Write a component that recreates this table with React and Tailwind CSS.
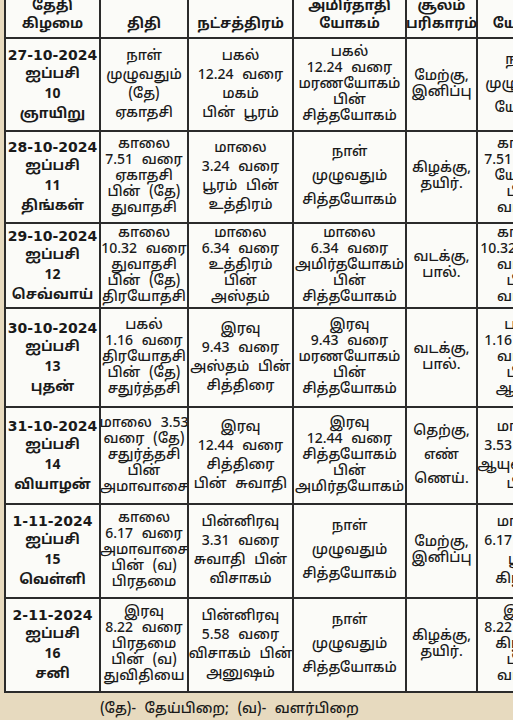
import React from "react";

const head = [
  ["தேதி", "கிழமை"],
  ["திதி"],
  ["நட்சத்திரம்"],
  ["அமிர்தாதி", "யோகம்"],
  ["சூலம்", "பரிகாரம்"],
  ["யோகம்"],
];

const rows = [
  {
    h: "h-[91px]",
    date: ["27-10-2024", "ஐப்பசி", "10", "ஞாயிறு"],
    cells: [
      ["நாள்", "முழுவதும்", "(தே)", "ஏகாதசி"],
      ["பகல்", "12.24 வரை", "மகம்", "பின் பூரம்"],
      ["பகல்", "12.24 வரை", "மரணயோகம்", "பின்", "சித்தயோகம்"],
      ["மேற்கு,", "இனிப்பு"],
      ["நாள்", "முழுவதும்", "யோகம்"],
    ],
  },
  {
    h: "h-[90px]",
    date: ["28-10-2024", "ஐப்பசி", "11", "திங்கள்"],
    cells: [
      ["காலை", "7.51 வரை", "ஏகாதசி", "பின் (தே)", "துவாதசி"],
      ["மாலை", "3.24 வரை", "பூரம் பின்", "உத்திரம்"],
      ["நாள்", "முழுவதும்", "சித்தயோகம்"],
      ["கிழக்கு,", "தயிர்."],
      ["காலை", "7.51 வரை", "யோகம்", "பின்", "வடக்கு"],
    ],
  },
  {
    h: "h-[83px]",
    date: ["29-10-2024", "ஐப்பசி", "12", "செவ்வாய்"],
    cells: [
      ["காலை", "10.32 வரை", "துவாதசி", "பின் (தே)", "திரயோதசி"],
      ["மாலை", "6.34 வரை", "உத்திரம்", "பின்", "அஸ்தம்"],
      ["மாலை", "6.34 வரை", "அமிர்தயோகம்", "பின்", "சித்தயோகம்"],
      ["வடக்கு,", "பால்."],
      ["காலை", "10.32 வரை", "வடக்கு", "பின்", "வடக்கு"],
    ],
  },
  {
    h: "h-[97px]",
    date: ["30-10-2024", "ஐப்பசி", "13", "புதன்"],
    cells: [
      ["பகல்", "1.16 வரை", "திரயோதசி", "பின் (தே)", "சதுர்த்தசி"],
      ["இரவு", "9.43 வரை", "அஸ்தம் பின்", "சித்திரை"],
      ["இரவு", "9.43 வரை", "மரணயோகம்", "பின்", "சித்தயோகம்"],
      ["வடக்கு,", "பால்."],
      ["பகல்", "1.16 வரை", "வடக்கு", "பின்", "ஆக்கம்"],
    ],
  },
  {
    h: "h-[95px]",
    date: ["31-10-2024", "ஐப்பசி", "14", "வியாழன்"],
    cells: [
      ["மாலை 3.53", "வரை (தே)", "சதுர்த்தசி", "பின்", "அமாவாசை"],
      ["இரவு", "12.44 வரை", "சித்திரை", "பின் சுவாதி"],
      ["இரவு", "12.44 வரை", "சித்தயோகம்", "பின்", "அமிர்தயோகம்"],
      ["தெற்கு,", "எண்", "ணெய்."],
      ["மாலை", "3.53 வரை", "ஆயுஷ்மான்", "பின்"],
    ],
  },
  {
    h: "h-[92px]",
    date: ["1-11-2024", "ஐப்பசி", "15", "வெள்ளி"],
    cells: [
      ["காலை", "6.17 வரை", "அமாவாசை", "பின் (வ)", "பிரதமை"],
      ["பின்னிரவு", "3.31 வரை", "சுவாதி பின்", "விசாகம்"],
      ["நாள்", "முழுவதும்", "சித்தயோகம்"],
      ["மேற்கு,", "இனிப்பு"],
      ["மாலை", "6.17 வரை", "பூமி", "கிழக்கு"],
    ],
  },
  {
    h: "h-[92px]",
    date: ["2-11-2024", "ஐப்பசி", "16", "சனி"],
    cells: [
      ["இரவு", "8.22 வரை", "பிரதமை", "பின் (வ)", "துவிதியை"],
      ["பின்னிரவு", "5.58 வரை", "விசாகம் பின்", "அனுஷம்"],
      ["நாள்", "முழுவதும்", "சித்தயோகம்"],
      ["கிழக்கு,", "தயிர்."],
      ["இரவு", "8.22 வரை", "கிழக்கு", "பின்", "வடக்கு"],
    ],
  },
];

const leadFor = (n) =>
  n >= 5 ? "leading-[16px]" : n === 4 ? "leading-[19px]" : n === 3 ? "leading-[24px]" : "leading-[16px]";

const Cell = ({ lines, className = "" }) => (
  <div className={`bg-[#fbfbf8] flex flex-col items-center justify-center text-center whitespace-nowrap overflow-hidden ${leadFor(lines.length)} ${className}`}>
    {lines.map((l, i) => (
      <span key={i} className="[word-spacing:5px]">{l}</span>
    ))}
  </div>
);

export default function App() {
  return (
    <div
      className="w-[513px] h-[720px] overflow-hidden bg-[#e7dabf] text-[#1a1a1a] text-[14px] font-medium"
      style={{ fontFamily: '"Noto Sans Tamil", "Lohit Tamil", "Liberation Sans", "DejaVu Sans", sans-serif' }}
    >
      <div className="ml-[4px] -mt-[12px] w-[580px] bg-[#2b2b2b] p-[2px] grid grid-cols-[93px_86px_103px_111px_69px_90px] gap-[2px]">
        {head.map((lines, i) => (
          <div
            key={i}
            className="h-[47px] bg-[#fbfbf8] flex flex-col items-center justify-end pb-[3px] text-center leading-[18px] font-bold whitespace-nowrap"
          >
            {lines.map((l, j) => (
              <span key={j}>{l}</span>
            ))}
          </div>
        ))}
        {rows.map((r, i) => (
          <React.Fragment key={i}>
            <div className={`${r.h} bg-[#fbfbf8] flex flex-col items-center justify-center leading-[20px] font-bold whitespace-nowrap`}>
              {r.date.map((l, j) => (
                <span key={j} className={j === 0 ? "text-[14px]" : ""} style={j === 0 ? { fontFamily: '"DejaVu Sans", sans-serif' } : undefined}>
                  {l}
                </span>
              ))}
            </div>
            {r.cells.map((c, j) => (
              <Cell key={j} lines={c} className={r.h} />
            ))}
          </React.Fragment>
        ))}
      </div>
      <div className="pt-[6px] pl-[100px] text-[14px] [word-spacing:5px]">(தே)- தேய்பிறை; (வ)- வளர்பிறை</div>
    </div>
  );
}
